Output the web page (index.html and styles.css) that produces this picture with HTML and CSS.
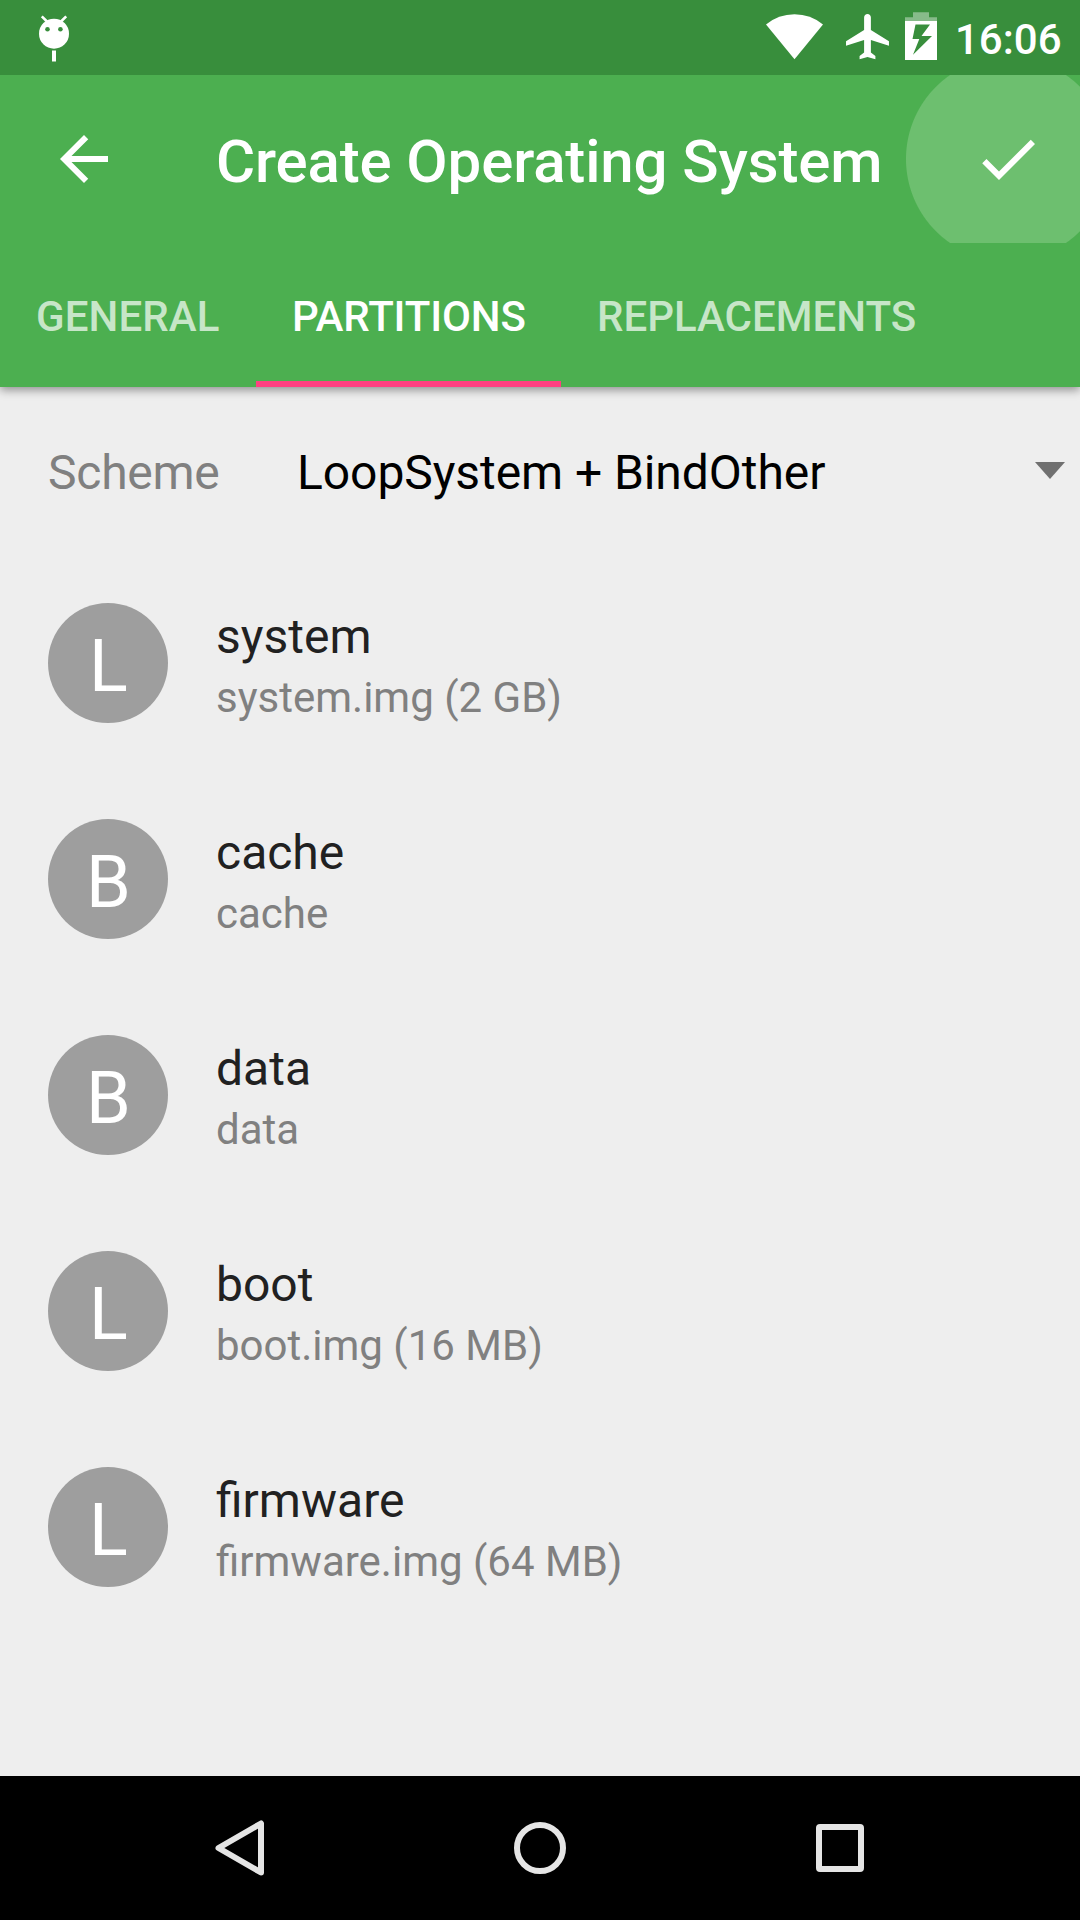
FILE: index.html
```html
<!DOCTYPE html>
<html lang="en">
<head>
<meta charset="utf-8">
<title>Create Operating System</title>
<link rel="stylesheet" href="styles.css">
</head>
<body>
<div class="screen">
  <div class="status">
    <svg class="debug" width="36" height="50" viewBox="36 14 36 50">
      <circle cx="54" cy="33.7" r="15" fill="#fff"/>
      <path d="M41.800 16.300L48 22.500M66.200 16.300L60 22.500" stroke="#fff" stroke-width="2.600"/>
      <circle cx="47.5" cy="29.3" r="2.3" fill="#388e3c"/><circle cx="60.4" cy="29.3" r="2.3" fill="#388e3c"/>
      <path d="M52 50.5h4v11h-4z" fill="#fff"/>
    </svg>
    <div class="status-icons">
      <svg width="58" height="75" viewBox="766 0 58 75"><path d="M794.5 59.3L766 24.5Q778.5 14.3 794.5 14.3T823 24.5z" fill="#fff"/></svg>
      <svg width="43" height="75" viewBox="846 0 43 75"><path transform="translate(841.5 9.6) scale(2.26)" d="M21 16v-2l-8-5V3.5c0-.83-.67-1.5-1.5-1.5S10 2.67 10 3.5V9l-8 5v2l8-2.5V19l-2 1.5V22l3.5-1 3.5 1v-1.5L13 19v-5.5l8 2.5z" fill="#fff"/></svg>
      <svg width="32" height="75" viewBox="905 0 32 75">
        <path d="M913 12.3h16v5h8V21h-32v-3.700h8z" fill="#fff" fill-opacity=".4"/>
        <path fill-rule="evenodd" d="M905 21h32v39h-32zM915.500 24.500L912.500 39H919.300L913 54.800L932 36H921.500L930 24.500z" fill="#fff"/>
      </svg>
      <span class="clock">16:06</span>
    </div>
  </div>

  <header class="appbar">
    <div class="toolbar">
      <svg class="back" width="72" height="72" viewBox="0 0 24 24"><path d="M20 11H7.830l5.590-5.590L12 4l-8 8 8 8 1.410-1.410L7.830 13H20v-2z" fill="#fff"/></svg>
      <h1 class="title">Create Operating System</h1>
      <div class="action">
        <svg width="72" height="72" viewBox="0 0 24 24"><path d="M9 16.170L4.830 12l-1.420 1.410L9 19 21 7l-1.410-1.410z" fill="#fff"/></svg>
      </div>
    </div>
    <nav class="tabs">
      <span class="tab general">GENERAL</span>
      <span class="tab active">PARTITIONS</span>
      <span class="tab">REPLACEMENTS</span>
    </nav>
  </header>

  <main class="content">
    <div class="scheme">
      <span class="label">Scheme</span>
      <span class="value">LoopSystem + BindOther</span>
      <svg class="caret" width="30" height="17" viewBox="0 0 30 17"><path d="M0 0h30L15 17z" fill="#707070"/></svg>
    </div>
    <div class="row"><div class="avatar">L</div><div class="text"><div class="name">system</div><div class="sub">system.img (2 GB)</div></div></div>
    <div class="row"><div class="avatar">B</div><div class="text"><div class="name">cache</div><div class="sub">cache</div></div></div>
    <div class="row"><div class="avatar">B</div><div class="text"><div class="name">data</div><div class="sub">data</div></div></div>
    <div class="row"><div class="avatar">L</div><div class="text"><div class="name">boot</div><div class="sub">boot.img (16 MB)</div></div></div>
    <div class="row"><div class="avatar">L</div><div class="text"><div class="name">firmware</div><div class="sub">firmware.img (64 MB)</div></div></div>
  </main>

  <footer class="navbar">
    <svg width="60" height="60" viewBox="210 1818 60 60"><path d="M261 1823.500V1872.500L218.500 1848z" fill="none" stroke="#e5e5e5" stroke-width="6" stroke-linejoin="round"/></svg>
    <svg width="60" height="60" viewBox="0 0 60 60"><circle cx="30" cy="30" r="23" fill="none" stroke="#e5e5e5" stroke-width="6"/></svg>
    <svg width="60" height="60" viewBox="0 0 60 60"><rect x="9" y="9" width="42" height="42" rx="1" fill="none" stroke="#e5e5e5" stroke-width="6"/></svg>
  </footer>
</div>
</body>
</html>
```

FILE: styles.css
```css
* { box-sizing: border-box; }
body { margin: 0; font-family: Roboto, "Noto Sans", sans-serif; }
svg { display: block; flex: none; }
.screen { width: 1080px; height: 1920px; display: flex; flex-direction: column; background: #eee; overflow: hidden; }

.status { position: relative; z-index: 1; height: 75px; flex: none; display: flex; justify-content: space-between; align-items: flex-start; background: #388e3c; padding-left: 36px; }
.debug { margin-top: 14px; }
.status-icons { display: flex; width: 314px; }
.status-icons svg:nth-child(2) { margin-left: 22px; }
.status-icons svg:nth-child(3) { margin-left: 16px; }
.clock { margin-left: 18px; font-size: 42px; line-height: 50px; padding-top: 15px; font-weight: 500; color: #fff; }

.appbar { flex: none; background: #4caf50; color: #fff; box-shadow: 0 3px 9px rgba(0, 0, 0, .4); }
.toolbar { height: 168px; display: flex; align-items: center; padding-left: 48px; background: radial-gradient(circle at 1008px 84px, #6dbf6f 101.5px, transparent 102.5px); }
.title { margin: 0 0 0 96px; flex: 1; font-size: 60px; line-height: 70px; font-weight: 500; letter-spacing: -.14px; white-space: nowrap; padding-top: 6px; }
.action { width: 144px; height: 168px; flex: none; display: flex; align-items: center; justify-content: center; }
.tabs { height: 144px; display: flex; }
.tab { padding: 49px 36px 0; font-size: 42px; line-height: 50px; font-weight: 500; color: rgba(255, 255, 255, .7); white-space: nowrap; }
.general { width: 256px; letter-spacing: .1px; }
.tab.active { width: 305px; color: #fff; letter-spacing: -.13px; border-bottom: 6px solid #ff4081; }

.content { flex: 1; }
.scheme { height: 168px; display: flex; align-items: center; padding: 4px 15px 0 48px; font-size: 48px; line-height: 56px; letter-spacing: -.07px; }
.label { width: 249px; color: #808080; letter-spacing: -.25px; }
.value { flex: 1; color: #000; }
.caret { margin-bottom: 6px; }
.row { height: 216px; display: flex; align-items: center; padding-left: 48px; }
.avatar { width: 120px; height: 120px; border-radius: 50%; background: #9e9e9e; color: #fff; font-size: 72px; line-height: 120px; padding: 4px 0 0 1px; text-align: center; }
.text { margin-left: 48px; padding-top: 5px; }
.name { font-size: 48px; line-height: 56px; color: #212121; }
.sub { font-size: 42px; line-height: 50px; margin-top: 8px; color: #808080; }

.navbar { height: 144px; flex: none; display: flex; align-items: center; justify-content: center; gap: 240px; background: #000; }
```
